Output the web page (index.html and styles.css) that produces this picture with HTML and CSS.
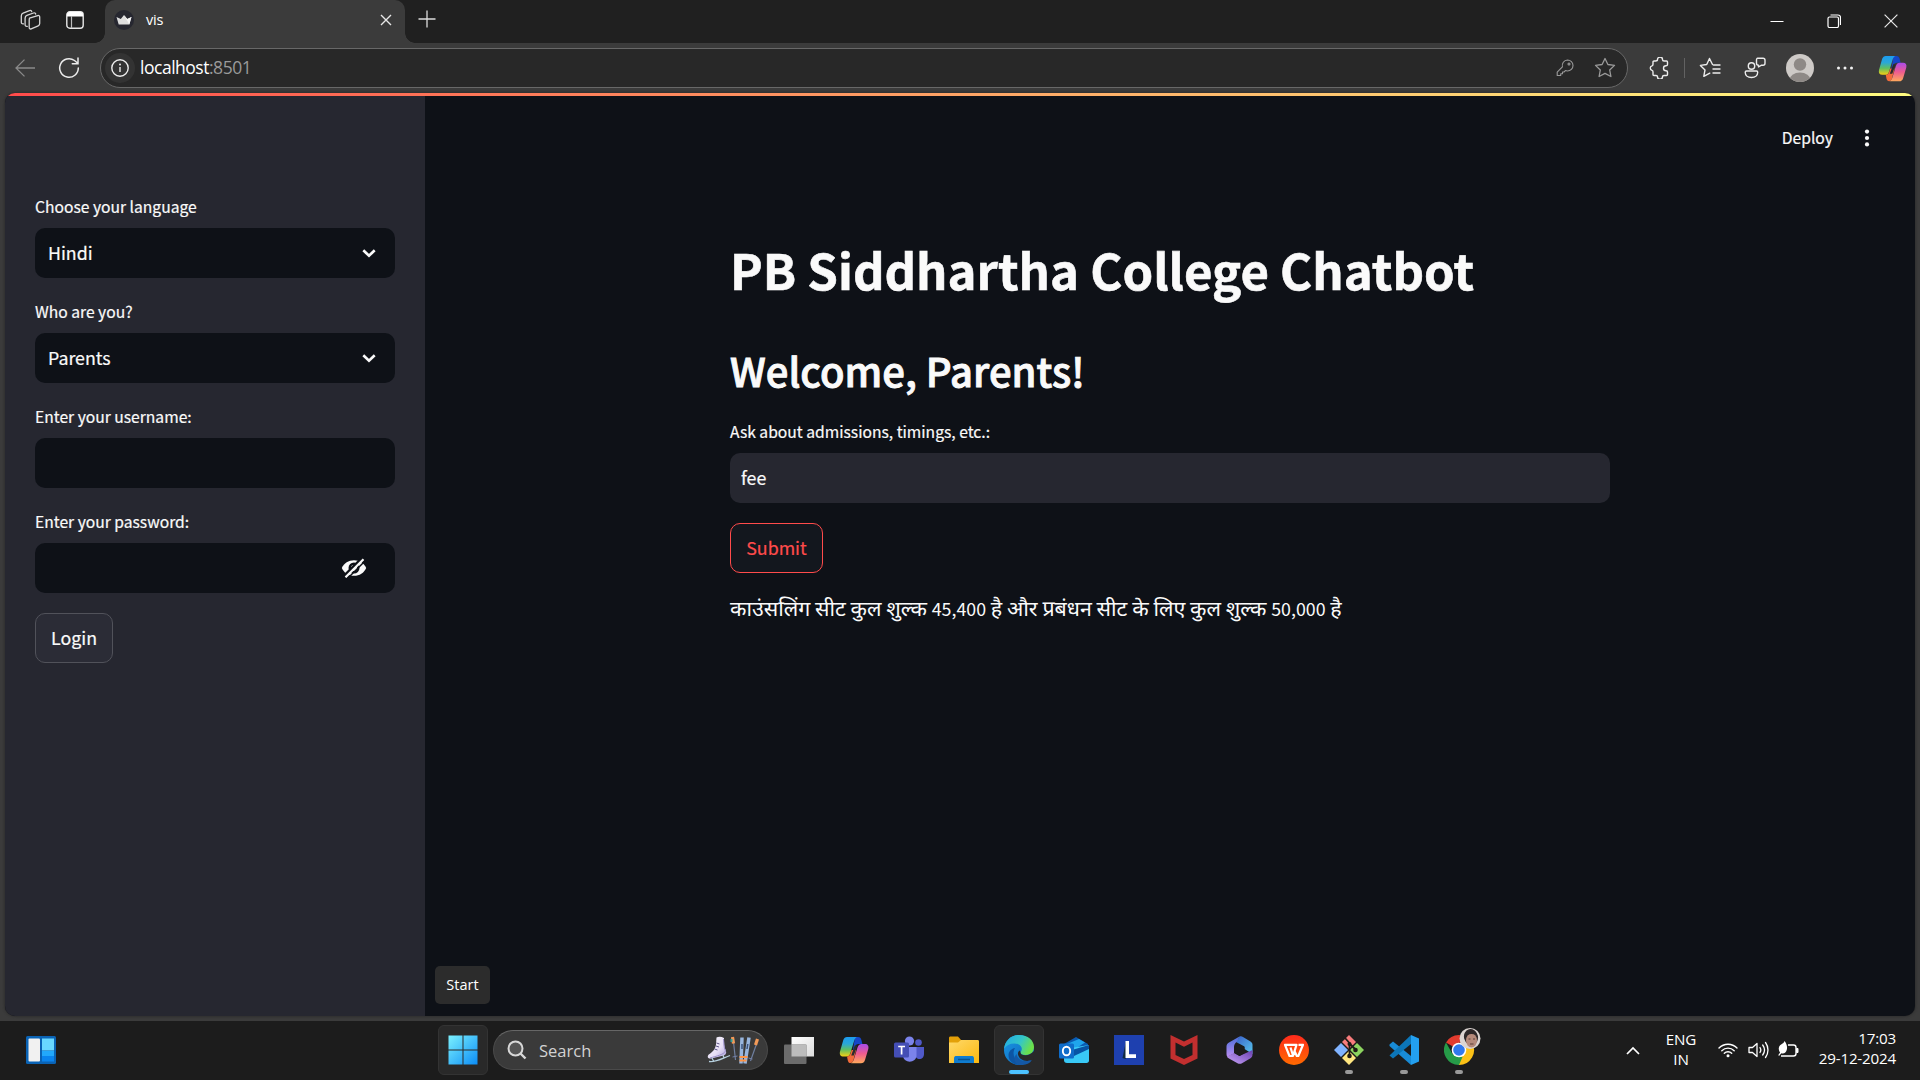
FILE: index.html
```html
<!DOCTYPE html>
<html lang="en">
<head>
<meta charset="utf-8">
<title>vis</title>
<link rel="stylesheet" href="styles.css">
</head>
<body>
<svg class="defs" width="0" height="0">
  <defs>
    <linearGradient id="cpA" x1="0" y1="0" x2="0" y2="1"><stop offset="0" stop-color="#1c9bf0"/><stop offset=".35" stop-color="#2aa7d8"/><stop offset=".65" stop-color="#5fbf62"/><stop offset="1" stop-color="#f5cf12"/></linearGradient>
    <linearGradient id="cpB" x1="0" y1="0" x2="0" y2="1"><stop offset="0" stop-color="#a94bea"/><stop offset=".5" stop-color="#ee5b90"/><stop offset="1" stop-color="#ffa95c"/></linearGradient>
    <linearGradient id="winG" gradientUnits="userSpaceOnUse" x1="0" y1="0" x2="30" y2="30"><stop offset="0" stop-color="#7df3ff"/><stop offset="1" stop-color="#0a8bf5"/></linearGradient>
    <linearGradient id="edgeA" x1="0" y1="0" x2="1" y2=".4"><stop offset="0" stop-color="#20a8e8"/><stop offset=".6" stop-color="#35c7c6"/><stop offset="1" stop-color="#6be04a"/></linearGradient>
    <linearGradient id="edgeB" x1="0" y1="0" x2="1" y2="1"><stop offset="0" stop-color="#1b98e6"/><stop offset="1" stop-color="#0b63b8"/></linearGradient>
    <linearGradient id="foldG" x1="0" y1="0" x2="1" y2="1"><stop offset="0" stop-color="#ffd96a"/><stop offset="1" stop-color="#fbb80f"/></linearGradient>
    <linearGradient id="wpsG" x1="0" y1="0" x2="0" y2="1"><stop offset="0" stop-color="#ff2a1c"/><stop offset="1" stop-color="#ff6a00"/></linearGradient>
    <linearGradient id="mA" x1="0" y1="0" x2="1" y2="1"><stop offset="0" stop-color="#3a5fc9"/><stop offset="1" stop-color="#58c8ee"/></linearGradient>
    <linearGradient id="mB" x1="0" y1="0" x2="0" y2="1"><stop offset="0" stop-color="#4a6fdb"/><stop offset="1" stop-color="#b98cf0"/></linearGradient>
    <linearGradient id="mC" x1="0" y1="1" x2="1" y2="0"><stop offset="0" stop-color="#c7a4f7"/><stop offset="1" stop-color="#6a3fb0"/></linearGradient>
    <linearGradient id="tvG" x1="0" y1="0" x2="1" y2="1"><stop offset="0" stop-color="#fff"/><stop offset="1" stop-color="#dcdcdc"/></linearGradient>
    <linearGradient id="skG" x1="0" y1="0" x2="1" y2="1"><stop offset="0" stop-color="#fdfaff"/><stop offset=".6" stop-color="#e6def5"/><stop offset="1" stop-color="#a79bd6"/></linearGradient>
    <symbol id="copilot" viewBox="0 0 30 28">
      <path d="M16 1h3c2 0 3 1 3.400 3l1 4h-3.500c-2.500 0-3.500 1-4.300 3.500L13 20z" fill="#1546c8"/>
      <path d="M8 1h10c-1.500.6-2.300 2-3 4.200L11.300 17.500C10.600 19.500 9.500 20.500 7.500 20.500H4.500C1.500 20.500.3 18.500 1 15.500L4.300 4C5 2 6.200 1 8 1z" fill="url(#cpA)"/>
      <path d="M8 20.500c2 0 3-1.200 3.600-3.200l1-3.300 4.500 0-2.600 10c-.6 2-1.500 3-3 3.100-1.500 0-2.300-1-2.700-2.600z" fill="#f26b3a"/>
      <path d="M22.500 8h3.500c2.700 0 4 2 3.300 5L26 24c-.7 2.200-2 3.200-4 3.200H12c1.500-.7 2.300-2 3-4.200l3.500-11.500C19.200 9.200 20.500 8 22.500 8z" fill="url(#cpB)"/>
      <path d="M15.800 9.500h2.600l-3.600 10h-2.600z" fill="#2b2b2e"/>
    </symbol>
  </defs>
</svg>

<header class="titlebar">
  <svg class="ic workspaces" width="22" height="22" viewBox="0 0 22 22" fill="none" stroke="#d6d6d6" stroke-width="1.300" stroke-linejoin="round" stroke-linecap="round"><path d="M9.500 9.200l8.200-2.600c1.200-.4 2 .2 2 1.400v6.600c0 1-.5 1.800-1.500 2.200l-7 3c-1.200.5-2-.1-2-1.300v-7c0-1 .2-1.900.3-2.300z"/><path d="M7.300 17.300c-1.500.2-2.200-.4-2.200-1.600V9.300c0-1.500.6-2.400 1.800-2.900L13.500 4c1.200-.4 2 0 2.200 1"/><path d="M3.500 14.800c-1.500.2-2.200-.4-2.200-1.600V7c0-1.500.6-2.400 1.800-2.900l6.400-2.500c1.200-.4 2 0 2.200 1"/></svg>
  <svg class="ic" width="18" height="18" viewBox="0 0 18 18"><rect x=".8" y=".8" width="16.400" height="16.400" rx="3" fill="none" stroke="#e6e6e6" stroke-width="1.400"/><path d="M1 5.500V3.500C1 2 2 1 3.500 1h11C16 1 17 2 17 3.500v2z" fill="#fff"/><path d="M5.500 5v12" stroke="#bbb" stroke-width="1.200"/></svg>
  <div class="tab">
    <svg width="20" height="20" viewBox="0 0 20 20"><circle cx="10" cy="10" r="10" fill="#262730"/><path d="M2.500 7l4.300 2L10 5l3.200 4 4.300-2-2.200 7.500H4.700z" fill="#dedede"/><path d="M10 5l3.200 4 4.300-2-2.200 7.500z" fill="#f5f5f5"/></svg>
    <span class="tab-title">vis</span>
    <svg class="tab-close" width="12" height="12" viewBox="0 0 12 12" stroke="#e8e8e8" stroke-width="1.400"><path d="M1 1l10 10M11 1L1 11"/></svg>
  </div>
  <svg class="newtab" width="18" height="18" viewBox="0 0 18 18" stroke="#dcdcdc" stroke-width="1.300"><path d="M9 .5v17M.5 9h17"/></svg>
  <div class="window-buttons">
    <svg width="14" height="14" viewBox="0 0 14 14"><path d="M.5 7.500h13" stroke="#fff"/></svg>
    <svg width="14" height="14" viewBox="0 0 14 14" fill="none" stroke="#fff" stroke-width="1.200"><rect x="1" y="3" width="10.500" height="10.500" rx="1.500"/><path d="M3.500 1h7.500c1.500 0 2.500 1 2.500 2.500V11"/></svg>
    <svg width="14" height="14" viewBox="0 0 14 14" stroke="#e8e8e8" stroke-width="1.200"><path d="M.6.600l12.800 12.800M13.400.6L.6 13.400"/></svg>
  </div>
</header>

<nav class="toolbar">
  <svg class="back" width="20" height="18" viewBox="0 0 20 18" fill="none" stroke="#8a8a8a" stroke-width="1.300"><path d="M20 9H1M9.500.6L1 9l8.500 8.400"/></svg>
  <svg class="reload" width="22" height="22" viewBox="0 0 22 22" fill="none" stroke="#ececec" stroke-width="1.500"><path d="M20.300 11a9.300 9.300 0 1 1-3.800-7.500L19.500 6M20 1v5.700h-5.700" stroke-linecap="round"/></svg>
  <div class="address">
    <span class="info"><svg width="18" height="18" viewBox="0 0 18 18"><circle cx="9" cy="9" r="8.200" fill="none" stroke="#ececec" stroke-width="1.400"/><path d="M9 8v5" stroke="#ececec" stroke-width="1.400"/><circle cx="9" cy="5.400" r="1" fill="#ececec"/></svg></span>
    <span class="url">localhost<span class="port">:8501</span></span>
    <svg class="key" width="18" height="18" viewBox="0 0 18 18" fill="none" stroke="#9a9a9a" stroke-width="1.100" stroke-linejoin="round"><path d="M11.500 1a5.500 5.500 0 0 1 0 11c-.8 0-1.500-.1-2.100-.4L8 13H6.500v1.800H4.700v1.700H1.200v-3.300l5.200-5.300A5.500 5.500 0 0 1 11.500 1z"/><circle cx="13" cy="5" r="1"/></svg>
    <svg class="star" width="22" height="22" viewBox="0 0 22 22" fill="none" stroke="#9a9a9a" stroke-width="1.300" stroke-linejoin="round"><path d="M11 1.500l2.900 6 6.600.9-4.800 4.600 1.200 6.500L11 16.400l-5.900 3.100L6.300 13 1.500 8.400l6.600-.9z"/></svg>
  </div>
  <div class="tools">
    <svg width="22" height="22" viewBox="0 0 22 22" fill="none" stroke="#ececec" stroke-width="1.400" stroke-linejoin="round"><path d="M5 4h1.500c1.500 0 2-.6 2-1.500a2.500 2.500 0 0 1 5 0c0 .9.500 1.500 1.500 1.500h2.500c.6 0 1 .4 1 1v2.500c0 1-.6 1.300-1.500 1.300a2.500 2.500 0 0 0 0 5c.9 0 1.500.4 1.500 1.300v2.400c0 .6-.4 1-1 1H15c-1 0-1.500.5-1.500 1.300a2.500 2.500 0 0 1-5 0c0-.9-.5-1.300-1.500-1.300H5c-.6 0-1-.4-1-1V15c0-1-.4-1.400-1-1.600a2.400 2.400 0 0 1 0-4.600c.6-.2 1-.7 1-1.500V5c0-.6.400-1 1-1z"/></svg>
    <i class="divider"></i>
    <svg class="favorites" width="22" height="22" viewBox="0 0 22 22" fill="none" stroke="#ececec" stroke-width="1.400" stroke-linejoin="round" stroke-linecap="round"><path d="M13.500 7.500L10.500 1.500l-2.800 6-6.300.9 4.600 4.500-1.200 6.500 6-3.200M14.500 8H21M14 12h7M14 16h7"/></svg>
    <svg class="share" width="22" height="22" viewBox="0 0 22 22" fill="none" stroke="#ececec" stroke-width="1.400" stroke-linejoin="round"><circle cx="7.500" cy="9" r="3.200"/><path d="M2.500 14h10c.8 0 1.200.5 1.200 1.200C13.700 18 11.500 20.500 7.500 20.500S1.200 18 1.200 15.200c0-.7.5-1.200 1.300-1.200zM13.500 1.200H19c1.200 0 2 .8 2 2v3c0 1.200-.8 2-2 2h-1.500L14.500 10V8.200c-1.200 0-2-.8-2-2v-3c0-1.200.5-2 1-2z"/></svg>
    <svg class="avatar" width="28" height="28" viewBox="0 0 28 28"><clipPath id="av"><circle cx="14" cy="14" r="14"/></clipPath><g clip-path="url(#av)"><rect width="28" height="28" fill="#cecac7"/><circle cx="14" cy="10.500" r="6.200" fill="#8e8986"/><ellipse cx="14" cy="26" rx="10.500" ry="7.500" fill="#8e8986"/></g></svg>
    <svg class="more" width="18" height="4" viewBox="0 0 18 4" fill="#f2f2f2"><circle cx="2.500" cy="2" r="1.500"/><circle cx="9" cy="2" r="1.500"/><circle cx="15.500" cy="2" r="1.500"/></svg>
    <svg class="assist" width="29" height="27"><use href="#copilot"/></svg>
  </div>
</nav>

<div class="frame">
  <div class="app">
    <div class="decoration"></div>
    <aside class="sidebar">
      <div class="label">Choose your language</div>
      <div class="field select"><span>Hindi</span><svg width="14" height="9" viewBox="0 0 14 9" fill="none" stroke="#fafafa" stroke-width="2.600"><path d="M1.300 1.300L7 6.800l5.700-5.500"/></svg></div>
      <div class="label">Who are you?</div>
      <div class="field select"><span>Parents</span><svg width="14" height="9" viewBox="0 0 14 9" fill="none" stroke="#fafafa" stroke-width="2.600"><path d="M1.300 1.300L7 6.800l5.700-5.500"/></svg></div>
      <div class="label">Enter your username:</div>
      <div class="field"></div>
      <div class="label">Enter your password:</div>
      <div class="field password"><svg width="26" height="20" viewBox="0 0 26 20"><path d="M.8 10C3 5 7.500 2.200 13 2.200S23 5 25.200 10C23 15 18.500 17.800 13 17.800S3 15 .8 10z" fill="#fafafa"/><circle cx="13" cy="10" r="5.500" fill="#0e1117"/><circle cx="13" cy="10" r="3" fill="#fafafa"/><path d="M2.500 18.500L21 0" stroke="#0e1117" stroke-width="2.600"/><path d="M4.500 19.300L22.500 1.300" stroke="#fafafa" stroke-width="2.200"/><path d="M6.500 20.500L24.500 2.500" stroke="#0e1117" stroke-width="1.500"/></svg></div>
      <div class="button login">Login</div>
    </aside>
    <main class="main">
      <div class="app-header"><span class="deploy">Deploy</span><svg width="6" height="18" viewBox="0 0 6 18" fill="#fafafa"><circle cx="3" cy="2.600" r="2.100"/><circle cx="3" cy="9" r="2.100"/><circle cx="3" cy="15.400" r="2.100"/></svg></div>
      <section class="content">
        <h1>PB Siddhartha College Chatbot</h1>
        <h2>Welcome, Parents!</h2>
        <div class="label ask">Ask about admissions, timings, etc.:</div>
        <div class="field query">fee</div>
        <div class="button submit">Submit</div>
        <p class="answer" lang="hi">काउंसलिंग सीट कुल शुल्क <span class="num">45,400</span> है और प्रबंधन सीट के लिए कुल शुल्क <span class="num">50,000</span> है</p>
      </section>
      <div class="tooltip">Start</div>
    </main>
  </div>
</div>

<footer class="taskbar">
  <svg class="widgets" width="30" height="28" viewBox="0 0 30 28"><rect width="30" height="28" rx="1.500" fill="#0a63b5"/><rect x="2.500" y="2.500" width="11.500" height="23" rx="1" fill="#f1f1f1"/><path d="M16 2.500h12v12H16z" fill="#69d8ff"/><path d="M16 15h12v5H16z" fill="#22a8fb"/><path d="M16 20h12v5.500H16z" fill="#0a84ee"/></svg>
  <div class="cell active start"><svg width="30" height="30" viewBox="0 0 30 30" fill="url(#winG)"><path d="M.5.500h14v14H.5zM15.500.500h14v14h-14zM.5 15.500h14v14H.5zM15.500 15.500h14v14h-14z" /></svg></div>
  <div class="search">
    <svg width="20" height="20" viewBox="0 0 20 20" fill="none" stroke="#d8d8d8" stroke-width="2"><circle cx="8.500" cy="8.500" r="7" fill="#555"/><path d="M13.500 13.500l5 5" stroke-width="2.400"/></svg>
    <span>Search</span>
    <svg class="skates" width="52" height="28" viewBox="0 0 52 28"><path d="M9.500 1.500c2-1 5-1 7.500.5 0 5 0 9 1.800 12.500 1 2.500.2 4-2 5L4 22.500C0 23 0 19.500 2.500 18c3-2 6-5 6.500-9.500z" fill="url(#skG)"/><path d="M16.500 3c.5 4 0 8 2 12-2 4-9 5-15.500 7" fill="none" stroke="#9a8fca"/><path d="M9.500 7l3 1M9 10l3 1M7.500 13l3 1" stroke="#5d5488"/><path d="M5 22l1.500 3M16 19l1 3M2 25.500c7 1 13-3 21-6" fill="none" stroke="#b6d0de" stroke-width="1.300"/><path d="M26.500 6l2 18M49.500 8l-6 17" stroke="#6f7f9f" stroke-width="1.200"/><path d="M25.500 21l5-1M41.500 22l4 1" stroke="#727fa6"/><path d="M25.500 1l1 6.500" stroke="#f39a58" stroke-width="3.200"/><path d="M23.500 4.500h2" stroke="#2f9f9a" stroke-width="3"/><path d="M50.500 3l-2 6" stroke="#f39a58" stroke-width="3.200"/><path d="M35 1.500l-1 26M42 1.500l-4 26" stroke="#98b6df" stroke-width="3.500"/><path d="M35 8v5M40.800 8l-.8 5" stroke="#3a5480" stroke-width="1.500"/><path d="M32.500 21h8M32.500 24.500h7" stroke="#ff9445" stroke-width="1.800"/></svg>
  </div>
  <div class="apps">
    <div class="cell"><svg width="30" height="28" viewBox="0 0 30 28"><path d="M7.500 1H30v19.500H7.500z" fill="url(#tvG)"/><rect y="8.500" width="22.500" height="19.500" rx="1" fill="#6b6b6b"/><path d="M7.500 8.500h15v12h-15z" fill="#bcbcbc"/></svg></div>
    <div class="cell"><svg width="30" height="28"><use href="#copilot"/></svg></div>
    <div class="cell"><svg width="30" height="28" viewBox="0 0 30 28"><circle cx="24.500" cy="6.500" r="3.300" fill="#5059c9"/><path d="M21 11h9v7c0 3-2 5-4.500 5S21 21 21 18z" fill="#5059c9"/><circle cx="15.500" cy="5" r="4.600" fill="#7b83eb"/><path d="M9 11h13.500v9.500a7 7 0 0 1-13.500 0z" fill="#7b83eb"/><rect y="6.500" width="15" height="15" rx="1.500" fill="#444eb5"/><path d="M4.200 10.500h6.800M7.600 10.500v8" stroke="#fff" stroke-width="1.700"/></svg></div>
    <div class="cell"><svg width="30" height="28" viewBox="0 0 30 28"><path d="M0 2c0-1 .5-1.500 1.500-1.500H9L12 4v4H0z" fill="#e3a008"/><path d="M0 6.500h9L12 4h16.500c1 0 1.500.5 1.500 1.500V27H0z" fill="url(#foldG)"/><path d="M5 27v-4.500C5 20.500 6 20 7.500 20h15c1.500 0 2.500.5 2.500 2.500V27z" fill="#0f7cd0"/><path d="M9 23.500h12" stroke="#075391" stroke-width="1.500"/></svg></div>
    <div class="cell active"><svg width="30" height="30" viewBox="0 0 30 30"><circle cx="15" cy="15" r="15" fill="url(#edgeB)"/><path d="M0 14C1 5 7.500 0 15 0c9 0 15 5.500 15 12 0 5-3.500 8-8.500 8-3.500 0-5-1-5-2.500 0-1 1.300-1.500 1.300-3.500 0-3-3.300-5.500-7.300-5.500C5.500 8.500 2 10.500 0 14z" fill="url(#edgeA)"/><path d="M11 13c-4.500 8 2 16 12 14.500-5 3.500-12 3.500-16.500-1.500C2.500 20.500 5 14 11 13z" fill="#0c55a4"/><path d="M16.500 17.500c0 1.500 1.500 2.700 5 2.700 3.700 0 6-1.500 8.500-4.200v5c0 3-1 4-2 4-7 2.500-13-.5-14-5.500-.3-2 .5-3.500 2-4z" fill="#292929"/><path d="M12.500 19c.5 5 6 8.500 13 6.500 1.500-.5 2.500-.5 2 .2C25 29 20 30.500 15 30c-5-1.500-6-6.500-2.500-11z" fill="#1458a5"/></svg><i class="run on"></i></div>
    <div class="cell"><svg width="30" height="28" viewBox="0 0 30 28"><path d="M5 8L17 1l12 7v6H5z" fill="#0a5bb2"/><path d="M8 8L20 3l6 3.500-14 9H8z" fill="#1fa5ec"/><path d="M5 13l25-4v15.500c0 1.500-1 2.500-2.500 2.500H8c-2 0-3-1-3-3z" fill="#39c9f6"/><path d="M30 9v4L15 20l-2-6z" fill="#0754a4"/><rect y="7.500" width="15" height="15" rx="1.500" fill="#0f6cc9"/><ellipse cx="7.500" cy="15" rx="3.700" ry="4.300" fill="none" stroke="#fff" stroke-width="1.900"/></svg></div>
    <div class="cell"><svg width="30" height="30" viewBox="0 0 30 30"><path d="M0 0h30v30H0z" fill="#1e40af"/><path d="M12 6L8.500 23l3 1 2-3z" fill="#10293f"/><path d="M11.500 6h3.500v13.200h7V23H11.500z" fill="#fff"/></svg></div>
    <div class="cell"><svg width="28" height="30" viewBox="0 0 28 30"><path d="M.5 0L14 6.500 27.500 0v23.500L14 30 .5 23.500z" fill="#c22f2f"/><path d="M5.500 7.500L14 11.700l8.500-4.200v12.500L14 24l-8.500-4z" fill="#1c1c1c"/></svg></div>
    <div class="cell"><svg width="27" height="28" viewBox="0 0 27 28"><path d="M13.500.5C15 0 16 .3 17 1l7.500 4.500c1.300.8 2 1.800 2 3.500v9l-8-5v-2.500L10 6z" fill="url(#mA)"/><path d="M13.500.5L3 6.500C1.300 7.500.5 8.500.5 10.500V18c0 1 .2 2 .8 2.800L8 17.500V11c0-2 1-4 3-5.500z" fill="url(#mB)"/><path d="M1 20.500L8 17l5.500 3 13-6v4.500c0 1.700-.7 3-2 3.700l-8.500 5c-1.500.8-3 .8-4.500 0L3 22.500c-1-.5-1.500-1-2-2z" fill="url(#mC)"/><path d="M13.500 8.500l5 2.800v5.800l-5 2.800-5-2.800v-5.800z" fill="#1c1c1c"/></svg></div>
    <div class="cell"><svg width="30" height="30" viewBox="0 0 30 30"><circle cx="15" cy="15" r="15" fill="url(#wpsG)"/><path d="M11.500 12.500L14 20.500M6 9.800h11.500L14 21h-3.500zM15.500 16l2.300 5h1.500L24 9.800h-4.500" fill="none" stroke="#fff" stroke-width="2.200" stroke-linejoin="round"/></svg></div>
    <div class="cell"><svg width="30" height="30" viewBox="0 0 30 30"><path d="M15 0l7 7-7 7-7-7z" fill="#f87c7c"/><path d="M7 8l7 7-7 7-7-7z" fill="#80b3ff"/><path d="M23 8l7 7-7 7-7-7z" fill="#8cd35f"/><path d="M15 16l7 7-7 7-7-7z" fill="#ffe680"/><path d="M11 3l4.500 5v14M15.500 8.500L22 15" fill="none" stroke="#201a16" stroke-width="1.800"/><circle cx="15.500" cy="9" r="2" fill="#201a16"/><circle cx="15.500" cy="21" r="2.300" fill="#201a16"/><circle cx="21.500" cy="15" r="2.300" fill="#201a16"/></svg><i class="run"></i></div>
    <div class="cell"><svg width="30" height="30" viewBox="0 0 30 30"><path d="M.5 9.500L4 6.500 22 21v9L.5 11z" fill="#188bd6"/><path d="M.5 20.500L22 0v9L4 23.500z" fill="#0c76b8"/><path d="M22 0l8 3.500v23L22 30z" fill="#23a0f0"/></svg><i class="run"></i></div>
    <div class="cell"><svg class="chrome" width="37" height="37" viewBox="0 0 37 37"><path d="M15 22L2 14.500a15 15 0 0 1 26 0H15z" fill="#e33b2e"/><path d="M15 22L28 14.500A15 15 0 0 1 15 37z" fill="#fbc116"/><path d="M2 14.500L8.500 26l10 3L15 37A15 15 0 0 1 2 14.500z" fill="#269b48"/><circle cx="15" cy="22" r="7.300" fill="#fff"/><circle cx="15" cy="22" r="5.800" fill="#3179ee"/><clipPath id="ph"><circle cx="26" cy="10.500" r="10.500"/></clipPath><g clip-path="url(#ph)"><path d="M15 0h22v22H15z" fill="#dcd5d2"/><ellipse cx="27" cy="9" rx="7" ry="8" fill="#302a2b" transform="rotate(-15 27 9)"/><ellipse cx="27.500" cy="12.500" rx="5.500" ry="7" fill="#b58a7b"/><path d="M22 9c1-3 5-4 11-2-1-7-12-5-11 2z" fill="#2c2728"/><path d="M24.500 11h2M29 11h2M26 16h3.500" stroke="#5a3f39"/></g></svg><i class="run"></i></div>
  </div>
  <div class="tray">
    <svg class="chev" width="14" height="9" viewBox="0 0 14 9" fill="none" stroke="#fff" stroke-width="1.700"><path d="M1 8l6-6 6 6"/></svg>
    <div class="lang">ENG<br>IN</div>
    <svg class="wifi" width="20" height="16" viewBox="0 0 20 16" fill="none" stroke="#fff" stroke-width="1.400" stroke-linecap="round"><path d="M1 6a12.600 12.600 0 0 1 18 0M3.800 8.700a8.800 8.800 0 0 1 12.400 0M6.300 11.300a5.300 5.300 0 0 1 7.400 0"/><circle cx="10" cy="13.700" r="1.500" fill="#fff" stroke="none"/></svg>
    <svg class="vol" width="21" height="18" viewBox="0 0 21 18" fill="none" stroke="#fff" stroke-width="1.300" stroke-linejoin="round" stroke-linecap="round"><path d="M1 6.500h3.500L9 2.500v13l-4.500-4H1zM12 6.500c1 1.500 1 3.500 0 5M14.700 4c2.200 3 2.200 7 0 10M17.500 1.500c3.300 4.500 3.300 10.500 0 15"/></svg>
    <svg class="bat" width="21" height="18" viewBox="0 0 21 18"><path d="M10 4h5.500C17 4 18 5 18 6.500v6c0 1.500-1 2.500-2.500 2.500H3" fill="none" stroke="#fff" stroke-width="1.400"/><path d="M18.500 7.500h1.500v4h-1.500z" fill="#fff" stroke="#fff"/><path d="M6.500 0c3 3.500 3.500 9 .8 11.500-1 1-2.500 1.300-4 .8L1 15 .3 14l1.800-2.500C-.5 8 1 4.500 3.500 3.200 5 2.500 6 1.500 6.500 0z" fill="#fff"/></svg>
    <div class="clock">17:03<br>29-12-2024</div>
  </div>
</footer>
</body>
</html>
```
FILE: styles.css
```css
* { box-sizing: border-box; }
body {
  margin: 0;
  width: 1920px;
  height: 1080px;
  overflow: hidden;
  display: flex;
  flex-direction: column;
  background: #3b3b3b;
  color: #fff;
  font-family: "Open Sans", "Noto Sans", sans-serif;
}
svg { display: block; flex: none; }
.defs { position: absolute; }

/* Title bar */
.titlebar {
  height: 43px;
  flex: none;
  display: flex;
  align-items: center;
  background: #202020;
  padding: 0 22px 0 20px;
}
.titlebar .ic { margin-bottom: 3px; }
.titlebar .workspaces { margin-right: 24px; }
.tab {
  position: relative;
  width: 300px;
  height: 43px;
  margin-left: 21px;
  padding: 0 13px 3px 9px;
  display: flex;
  align-items: center;
  background: #3b3b3b;
  border-radius: 10px 10px 0 0;
}
.tab::before, .tab::after {
  content: "";
  position: absolute;
  bottom: 0;
  width: 10px;
  height: 10px;
}
.tab::before { left: -10px; background: radial-gradient(circle at 0 0, transparent 9.5px, #3b3b3b 10px); }
.tab::after { right: -10px; background: radial-gradient(circle at 100% 0, transparent 9.5px, #3b3b3b 10px); }
.tab-title { margin: 0 0 2px 12px; font-size: 14.5px; letter-spacing: -0.2px; }
.tab-close { margin-left: auto; }
.newtab { margin: 0 0 5px 13px; }
.window-buttons { margin: 0 0 1px auto; display: flex; gap: 43px; }

/* Toolbar */
.toolbar {
  height: 50px;
  flex: none;
  display: flex;
  align-items: center;
  padding: 0 12px 0 15px;
}
.reload { margin-left: 23px; }
.address {
  width: 1528px;
  height: 40px;
  margin-left: 20px;
  padding: 0 11px 0 4px;
  display: flex;
  align-items: center;
  border: 1px solid #686868;
  border-radius: 20px;
  background: #282828;
}
.info {
  width: 30px;
  height: 30px;
  border-radius: 50%;
  background: #333;
  display: grid;
  place-items: center;
}
.url { margin-left: 5px; padding-bottom: 2px; font-size: 17.5px; letter-spacing: -0.48px; line-height: 36px; }
.port { color: #9a9a9a; }
.key { margin-left: auto; margin-right: 20px; }
.tools { display: flex; align-items: center; margin-left: 21px; }
.divider { width: 1px; height: 20px; background: #626262; margin-left: 13px; }
.favorites { margin-left: 14px; }
.share { margin-left: 23px; }
.avatar { margin-left: 20px; }
.more { margin-left: 22px; }
.assist { margin-left: 24px; }

/* Browser viewport */
.frame { height: 928px; flex: none; padding: 0 5px 5px; }
.app {
  position: relative;
  height: 923px;
  display: flex;
  overflow: hidden;
  border-radius: 10px;
  background: #0e1117;
  color: #fafafa;
  font-family: "Noto Sans CJK SC", "Noto Sans", sans-serif;
  -webkit-text-stroke: 0.2px;
  box-shadow: 0 0 3px #222;
}
.decoration {
  position: absolute;
  left: 0;
  right: 0;
  top: 0;
  height: 3px;
  background: linear-gradient(90deg, #ff4b4b, #fffd80);
}
.sidebar { width: 420px; flex: none; background: #262730; padding: 99px 30px 0; }
.label { height: 36px; line-height: 30px; font-size: 15.65px; white-space: nowrap; }
.field {
  height: 50px;
  border-radius: 10px;
  background: #0e1117;
  display: flex;
  align-items: center;
  font-size: 17.8px;
}
.select span { padding-bottom: 2px; }
.sidebar .field { margin-bottom: 19px; }
.sidebar .password { margin-bottom: 20px; padding-right: 28px; justify-content: flex-end; }
.select { justify-content: space-between; padding: 0 19px 0 13px; }
.button {
  height: 50px;
  padding-bottom: 2px;
  border: 1px solid #51525a;
  border-radius: 10px;
  display: flex;
  align-items: center;
  justify-content: center;
  font-size: 17.8px;
}
.login { width: 78px; background: #2b2c36; }
.main { position: relative; flex: 1; padding-left: 305px; }
.app-header {
  height: 90px;
  padding: 0 45px 0 0;
  display: flex;
  align-items: center;
  justify-content: flex-end;
  gap: 31px;
}
.deploy { font-size: 15.7px; padding-bottom: 2px; }
.content { width: 880px; }
h1 { margin: 44px 0 0; height: 84px; line-height: 84px; font-size: 49.1px; font-weight: 700; white-space: nowrap; -webkit-text-stroke: 0.6px; }
h2 { margin: 24px 0 0; height: 70px; line-height: 70px; font-size: 40px; font-weight: 500; white-space: nowrap; -webkit-text-stroke: 0.9px; }
.ask { margin-top: 12px; }
.query { background: #262730; padding: 0 0 2px 11px; }
.submit { margin-top: 20px; width: 93px; border-color: #ff4b4b; background: #13171e; color: #ff4b4b; }
.answer { margin: 17px 0 0; font-size: 21.4px; line-height: 34px; white-space: nowrap; -webkit-text-stroke: 0; }
.num { font-size: 17.8px; }
.tooltip {
  position: absolute;
  left: 10px;
  bottom: 12px;
  width: 55px;
  height: 38px;
  border-radius: 5px;
  background: #2c2c2c;
  color: #fff;
  font: 14.5px/37px "Open Sans", sans-serif;
  -webkit-text-stroke: 0;
  text-align: center;
}

/* Taskbar */
.taskbar {
  height: 59px;
  flex: none;
  display: flex;
  align-items: center;
  background: #1c1c1c;
  padding: 0 24px 1px 26px;
}
.cell {
  position: relative;
  width: 50px;
  height: 50px;
  display: grid;
  place-items: center;
  border-radius: 6px;
  border: 1px solid transparent;
}
.cell.active { background: #292929; border-color: #333; }
.start { margin-left: 382px; }
.search {
  width: 275px;
  height: 40px;
  margin-left: 5px;
  padding: 0 8px 0 13px;
  display: flex;
  align-items: center;
  border-radius: 20px;
  border: 1px solid #4a4a4a;
  border-top-color: #666;
  background: #3a3a3a;
  color: #d2d2d2;
  font-size: 16.5px;
}
.search span { margin-left: 12px; }
.skates { margin-left: auto; }
.apps { display: flex; gap: 5px; margin-left: 6px; }
.run {
  position: absolute;
  left: 20px;
  bottom: 0;
  width: 8px;
  height: 4px;
  border-radius: 2px;
  background: #999;
}
.run.on { left: 14px; width: 20px; background: #4cc2ff; }
.chrome { margin: -7px -7px 0 0; }
.tray { margin-left: auto; display: flex; align-items: center; font-size: 15.2px; line-height: 20px; letter-spacing: -0.2px; }
.lang { margin-left: 24px; padding-bottom: 3px; width: 34px; text-align: center; }
.wifi { margin-left: 20px; }
.vol { margin-left: 10px; }
.bat { margin-left: 9px; }
.clock { margin-left: 16px; padding-bottom: 4px; width: 81px; text-align: right; white-space: nowrap; }
```
